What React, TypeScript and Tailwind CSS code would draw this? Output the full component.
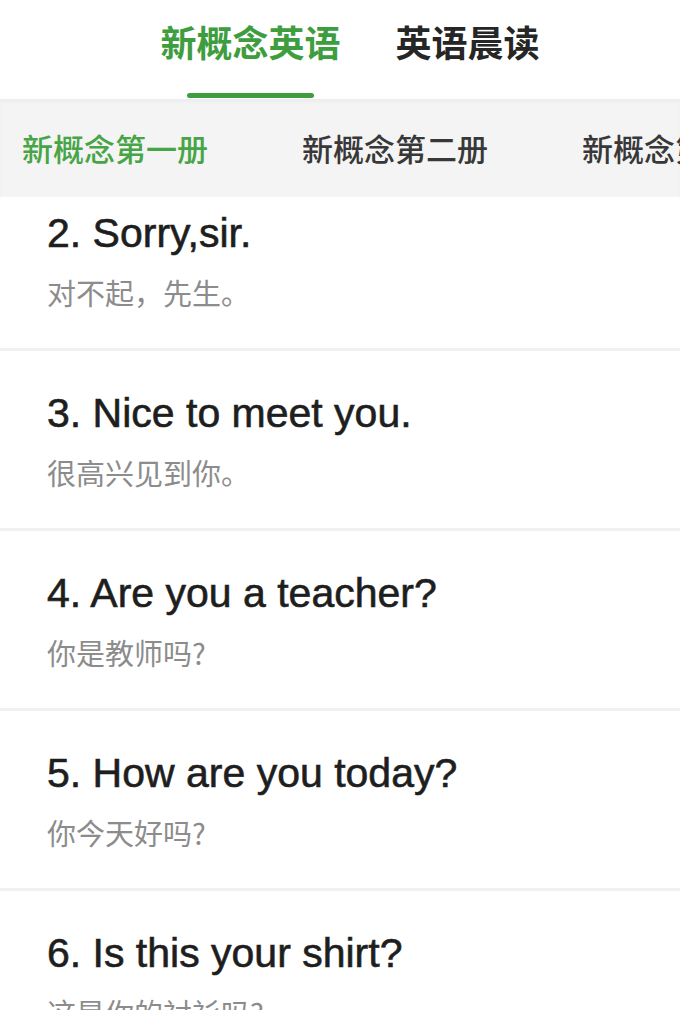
const topTabs = [
  { label: '新概念英语', active: true },
  { label: '英语晨读', active: false },
];

const bookTabs = ['新概念第一册', '新概念第二册', '新概念第三册', '新概念第四册'];

const lessons = [
  { en: '2. Sorry,sir.', zh: '对不起，先生。' },
  { en: '3. Nice to meet you.', zh: '很高兴见到你。' },
  { en: '4. Are you a teacher?', zh: '你是教师吗?' },
  { en: '5. How are you today?', zh: '你今天好吗?' },
  { en: '6. Is this your shirt?', zh: '这是你的衬衫吗?' },
  { en: '7. Are you a teacher?', zh: '你是教师吗?' },
];

const cjk = "font-['Noto_Sans_CJK_SC',sans-serif]";

export default function App() {
  return (
    <div className="w-[680px] h-[1010px] overflow-hidden bg-white flex flex-col">
      {/* Top tabs */}
      <div className="h-[99px] shrink-0 bg-white flex justify-center pl-[20px] gap-[55px]">
        {topTabs.map((t) => (
          <div key={t.label} className="flex flex-col items-center">
            <div
              className={`${cjk} mt-[17px] text-[36px] leading-[48px] font-bold ${
                t.active ? 'text-[#3e9d3e]' : 'text-[#262626]'
              }`}
            >
              {t.label}
            </div>
            {t.active && <div className="mt-[28px] w-[127px] h-[5px] rounded-full bg-[#3e9d3e]" />}
          </div>
        ))}
      </div>

      {/* Book tabs */}
      <div className="h-[98px] shrink-0 bg-[#f4f4f4] shadow-[inset_0_3px_3px_rgba(0,0,0,0.03)] flex items-center pl-[22px] gap-[94px] whitespace-nowrap overflow-hidden">
        {bookTabs.map((b, i) => (
          <span
            key={b}
            className={`${cjk} text-[31px] leading-[40px] font-medium shrink-0 ${
              i === 0 ? 'text-[#47a547]' : 'text-[#383838]'
            }`}
          >
            {b}
          </span>
        ))}
      </div>

      {/* Lesson list (scrolled a little) */}
      <div className="flex-1 overflow-hidden">
        <div className="-mt-[26px]">
          {lessons.map((l) => (
            <div key={l.en} className="pt-[38px] pb-[38px] pl-[47px] border-b-[3px] border-[#f0f0f0] bg-white">
              <div className="font-['Liberation_Sans',sans-serif] text-[41px] leading-[48px] text-[#1e1e1e] [-webkit-text-stroke:0.6px_#1e1e1e]">
                {l.en}
              </div>
              <div className={`${cjk} mt-[17px] text-[29px] leading-[36px] text-[#8c8c8c]`}>{l.zh}</div>
            </div>
          ))}
        </div>
      </div>
    </div>
  );
}
